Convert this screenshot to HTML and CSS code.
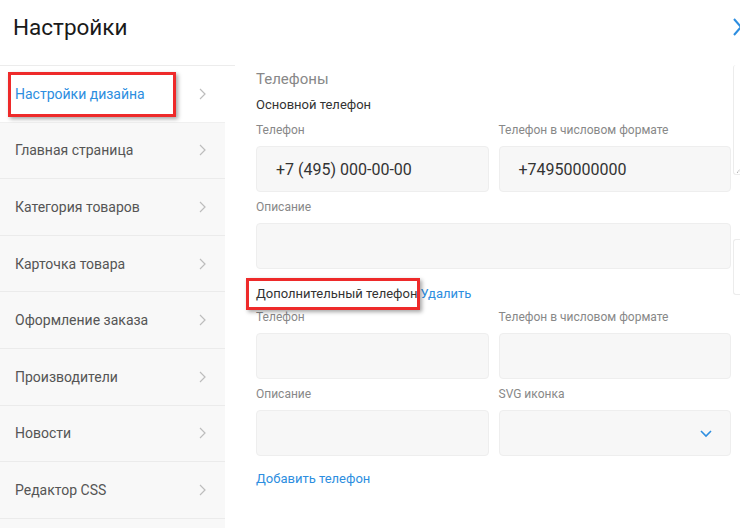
FILE: index.html
```html
<!DOCTYPE html>
<html lang="ru">
<head>
<meta charset="utf-8">
<title>Настройки</title>
<link rel="stylesheet" href="styles.css">
</head>
<body>
<div class="page">
  <header class="header">
    <h1 class="title">Настройки</h1>
    <svg class="close" width="10" height="18" viewBox="0 0 10 18"><polyline points="1,1 8,9 1,17" fill="none" stroke="#2d8ee0" stroke-width="2"/></svg>
  </header>
  <div class="body">
    <nav class="sidebar">
      <a class="item active"><span>Настройки дизайна</span><svg class="chev" width="7" height="12" viewBox="0 0 7 12"><polyline points="1,1 6,6 1,11" fill="none" stroke="#bdbdbd" stroke-width="1.2"/></svg><span class="mark mark-nav"></span></a>
      <a class="item"><span>Главная страница</span><svg class="chev" width="7" height="12" viewBox="0 0 7 12"><polyline points="1,1 6,6 1,11" fill="none" stroke="#bdbdbd" stroke-width="1.2"/></svg></a>
      <a class="item"><span>Категория товаров</span><svg class="chev" width="7" height="12" viewBox="0 0 7 12"><polyline points="1,1 6,6 1,11" fill="none" stroke="#bdbdbd" stroke-width="1.2"/></svg></a>
      <a class="item"><span>Карточка товара</span><svg class="chev" width="7" height="12" viewBox="0 0 7 12"><polyline points="1,1 6,6 1,11" fill="none" stroke="#bdbdbd" stroke-width="1.2"/></svg></a>
      <a class="item"><span>Оформление заказа</span><svg class="chev" width="7" height="12" viewBox="0 0 7 12"><polyline points="1,1 6,6 1,11" fill="none" stroke="#bdbdbd" stroke-width="1.2"/></svg></a>
      <a class="item"><span>Производители</span><svg class="chev" width="7" height="12" viewBox="0 0 7 12"><polyline points="1,1 6,6 1,11" fill="none" stroke="#bdbdbd" stroke-width="1.2"/></svg></a>
      <a class="item"><span>Новости</span><svg class="chev" width="7" height="12" viewBox="0 0 7 12"><polyline points="1,1 6,6 1,11" fill="none" stroke="#bdbdbd" stroke-width="1.2"/></svg></a>
      <a class="item"><span>Редактор CSS</span><svg class="chev" width="7" height="12" viewBox="0 0 7 12"><polyline points="1,1 6,6 1,11" fill="none" stroke="#bdbdbd" stroke-width="1.2"/></svg></a>
      <a class="item last"></a>
    </nav>
    <main class="form">
      <div class="section-title">Телефоны</div>
      <div class="group-title">Основной телефон</div>
      <div class="grid">
        <div class="field">
          <div class="label">Телефон</div>
          <div class="input">+7 (495) 000-00-00</div>
        </div>
        <div class="field">
          <div class="label">Телефон в числовом формате</div>
          <div class="input">+74950000000</div>
        </div>
        <div class="field wide">
          <div class="label">Описание</div>
          <div class="input"></div>
        </div>
      </div>
      <div class="group-title extra"><span class="marked">Дополнительный телефон<span class="mark mark-title"></span></span><a class="link">Удалить</a></div>
      <div class="grid second">
        <div class="field">
          <div class="label">Телефон</div>
          <div class="input"></div>
        </div>
        <div class="field">
          <div class="label">Телефон в числовом формате</div>
          <div class="input"></div>
        </div>
        <div class="field">
          <div class="label">Описание</div>
          <div class="input"></div>
        </div>
        <div class="field">
          <div class="label">SVG иконка</div>
          <div class="input select"><svg width="12" height="8" viewBox="0 0 12 8"><polyline points="1,1 6,6 11,1" fill="none" stroke="#2d8ee0" stroke-width="1.6"/></svg></div>
        </div>
      </div>
      <a class="link add">Добавить телефон</a>
    </main>
    <aside class="edge">
      <div class="edge-box tall"><span class="resize"></span></div>
      <div class="edge-box short"></div>
    </aside>
  </div>
</div>
</body>
</html>
```
FILE: styles.css
```css
* { box-sizing: border-box; }
html, body { margin: 0; padding: 0; background: #fff; }
body { font-family: Roboto, "Noto Sans", sans-serif; color: #333; }
.page { width: 740px; height: 528px; overflow: hidden; }
.header { height: 65px; display: flex; justify-content: space-between; align-items: flex-start; }
.title { margin: 0; padding: 12px 0 0 13px; font-size: 22.5px; font-weight: 400; line-height: 30px; color: #1a1a1a; }
.close { margin-top: 18px; margin-right: -3px; }
.body { display: flex; height: 463px; }
.sidebar { width: 235px; flex: none; border-top: 1px solid #ececec; display: flex; flex-direction: column; overflow: hidden; }
.item { position: relative; width: 225px; height: 56.6px; flex: none; background: #f8f8f8; border-bottom: 1px solid #ebebeb; display: flex; align-items: center; justify-content: space-between; padding: 0 19px 0 15px; font-size: 14px; color: #555; text-decoration: none; }
.item.last { height: 10px; border-bottom: none; }
.item.active { background: #fff; color: #2d8ee0; border-bottom-color: #f0f0f0; }
.mark { position: absolute; border: 3px solid #ee2a2a; box-shadow: 2px 2px 4px rgba(0,0,0,0.35); pointer-events: none; }
.mark-nav { left: 8px; top: 6px; width: 168px; height: 45px; }
.form { width: 475px; flex: none; margin-left: 21px; padding-top: 4px; }
.section-title { font-size: 15px; line-height: 20px; color: #888; }
.group-title { font-size: 13px; line-height: 20px; color: #333; margin-top: 6px; }
.group-title.extra { margin-top: 15px; display: flex; }
.marked { position: relative; }
.mark-title { left: -10px; top: -6px; width: 174px; height: 32px; }
.link { color: #2d8ee0; text-decoration: none; font-size: 13px; }
.group-title .link { margin-left: 3px; }
.grid { display: grid; grid-template-columns: 1fr 1fr; column-gap: 10px; row-gap: 7px; margin-top: 7px; }
.grid.second { margin-top: 5px; }
.field.wide { grid-column: 1 / 3; }
.label { font-size: 12px; line-height: 16px; color: #888; margin-bottom: 8px; }
.input { height: 46px; background: #f7f7f7; border: 1px solid #eeeeee; border-radius: 4px; padding: 0 19px; display: flex; align-items: center; font-size: 16px; color: #333; }
.select { justify-content: flex-end; padding-right: 18px; }
.select svg { margin-top: 2px; }
.add { display: block; margin-top: 13px; line-height: 20px; }
.edge { flex: 1; margin-left: 2px; display: flex; flex-direction: column; }
.edge-box { border: 1px solid #ececec; border-right: none; border-radius: 3px 0 0 3px; background: #fff; }
.edge-box.tall { height: 110px; position: relative; border-top: none; }
.edge-box.short { height: 56px; margin-top: 64px; }
.resize { position: absolute; left: 1px; bottom: 2px; width: 5px; height: 5px; border-right: 1px dotted #999; transform: rotate(45deg); }
```
